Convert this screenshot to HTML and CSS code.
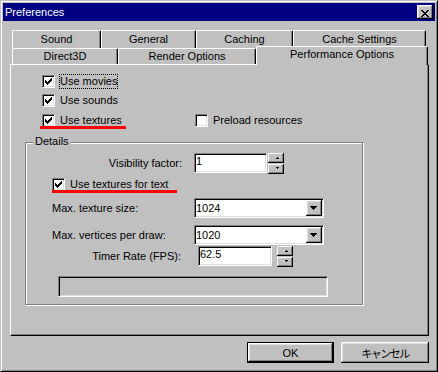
FILE: index.html
```html
<!DOCTYPE html>
<html lang="en">

<head>
    <meta charset="UTF-8">
    <title>Preferences</title>
    <link rel="stylesheet" href="styles.css">
</head>

<body>

    <div class="window">
        <!-- Title bar -->
        <div class="titlebar">
            <span class="title">Preferences</span>
            <button class="close" title="Close">
                <svg width="8" height="7" viewBox="0 0 8 7" shape-rendering="crispEdges">
                    <path d="M0 0h2v1h-2z M6 0h2v1h-2z M1 1h2v1h-2z M5 1h2v1h-2z M2 2h4v1h-4z M3 3h2v1h-2z M2 4h4v1h-4z M1 5h2v1h-2z M5 5h2v1h-2z M0 6h2v1h-2z M6 6h2v1h-2z" fill="#000" />
                </svg>
            </button>
        </div>

        <div class="dialog">
            <!-- Tabs: two rows, the selected one sits in the front row -->
            <div class="tabrow back">
                <div class="tab tab-sound">Sound</div>
                <div class="tab tab-general">General</div>
                <div class="tab tab-caching">Caching</div>
                <div class="tab tab-cache">Cache Settings</div>
            </div>
            <div class="tabrow front">
                <div class="tab tab-d3d">Direct3D</div>
                <div class="tab tab-render">Render Options</div>
                <div class="tab tab-perf active">Performance Options</div>
            </div>

            <div class="panel">
                <div class="checks">
                    <div class="check-row">
                        <label class="check">
                            <span class="box"><svg width="7" height="7" viewBox="0 0 7 7" shape-rendering="crispEdges"><path d="M0 2h1v3h-1z M1 3h1v3h-1z M2 4h1v3h-1z M3 3h1v3h-1z M4 2h1v3h-1z M5 1h1v3h-1z M6 0h1v3h-1z" /></svg></span>
                            <span class="check-text focus">Use movies</span>
                        </label>
                    </div>
                    <div class="check-row">
                        <label class="check">
                            <span class="box"><svg width="7" height="7" viewBox="0 0 7 7" shape-rendering="crispEdges"><path d="M0 2h1v3h-1z M1 3h1v3h-1z M2 4h1v3h-1z M3 3h1v3h-1z M4 2h1v3h-1z M5 1h1v3h-1z M6 0h1v3h-1z" /></svg></span>
                            <span class="check-text">Use sounds</span>
                        </label>
                    </div>
                    <div class="check-row third">
                        <label class="check wide mark mark-short">
                            <span class="box"><svg width="7" height="7" viewBox="0 0 7 7" shape-rendering="crispEdges"><path d="M0 2h1v3h-1z M1 3h1v3h-1z M2 4h1v3h-1z M3 3h1v3h-1z M4 2h1v3h-1z M5 1h1v3h-1z M6 0h1v3h-1z" /></svg></span>
                            <span class="check-text">Use textures</span>
                        </label>
                        <label class="check">
                            <span class="box"></span>
                            <span class="check-text">Preload resources</span>
                        </label>
                    </div>
                </div>

                <!-- Details group -->
                <div class="group">
                    <span class="group-title">Details</span>

                    <div class="row">
                        <span class="row-label right">Visibility factor:</span>
                        <div class="field">1</div>
                        <div class="spin">
                            <div class="spin-btn up"><svg width="3" height="2" viewBox="0 0 3 2" shape-rendering="crispEdges"><path d="M1 0h1v1h-1z M0 1h3v1h-3z" /></svg></div>
                            <div class="spin-btn down"><svg width="3" height="2" viewBox="0 0 3 2" shape-rendering="crispEdges"><path d="M0 0h3v1h-3z M1 1h1v1h-1z" /></svg></div>
                        </div>
                    </div>

                    <div class="check-row inner">
                        <label class="check mark mark-long">
                            <span class="box"><svg width="7" height="7" viewBox="0 0 7 7" shape-rendering="crispEdges"><path d="M0 2h1v3h-1z M1 3h1v3h-1z M2 4h1v3h-1z M3 3h1v3h-1z M4 2h1v3h-1z M5 1h1v3h-1z M6 0h1v3h-1z" /></svg></span>
                            <span class="check-text">Use textures for text</span>
                        </label>
                    </div>

                    <div class="row combo-row">
                        <span class="row-label left">Max. texture size:</span>
                        <div class="combo">
                            <span>1024</span>
                            <div class="combo-btn"><svg width="7" height="4" viewBox="0 0 7 4" shape-rendering="crispEdges"><path d="M0 0h7v1h-7z M1 1h5v1h-5z M2 2h3v1h-3z M3 3h1v1h-1z" /></svg></div>
                        </div>
                    </div>

                    <div class="row combo-row">
                        <span class="row-label left">Max. vertices per draw:</span>
                        <div class="combo">
                            <span>1020</span>
                            <div class="combo-btn"><svg width="7" height="4" viewBox="0 0 7 4" shape-rendering="crispEdges"><path d="M0 0h7v1h-7z M1 1h5v1h-5z M2 2h3v1h-3z M3 3h1v1h-1z" /></svg></div>
                        </div>
                    </div>

                    <div class="row timer-row">
                        <span class="row-label right timer">Timer Rate (FPS):</span>
                        <div class="field timer">62.5</div>
                        <div class="spin timer">
                            <div class="spin-btn up"><svg width="3" height="2" viewBox="0 0 3 2" shape-rendering="crispEdges"><path d="M1 0h1v1h-1z M0 1h3v1h-3z" /></svg></div>
                            <div class="spin-btn down"><svg width="3" height="2" viewBox="0 0 3 2" shape-rendering="crispEdges"><path d="M0 0h3v1h-3z M1 1h1v1h-1z" /></svg></div>
                        </div>
                    </div>

                    <div class="status"></div>
                </div>
            </div>

            <div class="actions">
                <button class="btn default">OK</button>
                <button class="btn cancel">キャンセル</button>
            </div>
        </div>
    </div>

</body>

</html>
```

FILE: styles.css
```css
* {
    box-sizing: border-box;
}

body {
    margin: 0;
    font-family: "Liberation Sans", Arial, sans-serif;
    font-size: 11px;
    color: #000;
}

.window {
    width: 438px;
    height: 372px;
    padding: 2px;
    background: #c0c0c0;
    border: 1px solid;
    border-color: #c0c0c0 #000 #000 #c0c0c0;
    box-shadow: inset 1px 1px #fff, inset -1px -1px #808080;
}

.titlebar {
    height: 18px;
    padding: 0 2px;
    display: flex;
    align-items: center;
    justify-content: space-between;
    background: #000080;
    color: #fff;
    line-height: 13px;
}

.close {
    width: 16px;
    height: 14px;
    padding: 0;
    border: 0;
    background: #c0c0c0;
    box-shadow: inset -1px -1px #000, inset 1px 1px #fff, inset -2px -2px #808080, inset 2px 2px #dfdfdf;
}

.close svg {
    display: block;
    margin: 3px 0 0 4px;
}

.dialog {
    padding: 9px 6px 0 7px;
}

/* tabs */
.tabrow {
    display: flex;
    margin-left: 2px;
}

.tabrow.back {
    height: 18px;
}

.tabrow.front {
    height: 16px;
    align-items: flex-end;
}

.tab {
    height: 100%;
    display: flex;
    align-items: center;
    justify-content: center;
    background: #c0c0c0;
    border-top: 1px solid #fff;
    border-left: 1px solid #fff;
    border-right: 1px solid #000;
    border-radius: 2px 2px 0 0;
    box-shadow: inset -1px 0 #808080;
    line-height: 13px;
    white-space: nowrap;
}

.tabrow.front .tab {
    padding-bottom: 1px;
}

.tab-sound { width: 89px; }
.tab-general { width: 95px; }
.tab-caching { width: 97px; }
.tab-cache { width: 133px; }
.tab-d3d { width: 106px; }
.tab-render { width: 138px; }
.tab-perf { width: 172px; }

.tab.active {
    position: relative;
    z-index: 1;
    height: 19px;
    margin-bottom: -1px;
    padding-bottom: 4px;
}

.tabrow.front .tab.active {
    padding-bottom: 4px;
}

.panel {
    height: 272px;
    padding: 10px 0 0 14px;
    border: 1px solid;
    border-color: #fff #000 #000 #fff;
    box-shadow: inset -1px -1px #808080;
}

/* checkboxes */
.checks {
    padding-left: 17px;
}

.check-row {
    display: flex;
    align-items: center;
    height: 13px;
}

.check-row + .check-row {
    margin-top: 6px;
}

.check-row.third {
    margin-top: 7px;
}

.check {
    display: flex;
    align-items: center;
}

.check.wide {
    width: 153px;
}

.box {
    width: 13px;
    height: 13px;
    flex: none;
    padding: 2px;
    background: #fff;
    border: 1px solid;
    border-color: #808080 #fff #fff #808080;
    box-shadow: inset 1px 1px #000, inset -1px -1px #dfdfdf;
}

.box svg {
    display: block;
}

.check-text {
    margin-left: 4px;
    border: 1px solid transparent;
    line-height: 13px;
    white-space: nowrap;
}

.check-text.focus {
    border: 1px dotted #000;
}

/* red marks under some options */
.mark {
    position: relative;
}

.mark::after {
    content: "";
    position: absolute;
    top: 13px;
    height: 3px;
    background: #f00;
}

.mark-short::after {
    left: -2px;
    width: 86px;
}

.mark-long::after {
    left: 0;
    width: 125px;
}

/* details group */
.group {
    position: relative;
    width: 338px;
    height: 163px;
    margin-top: 15px;
    padding-top: 10px;
    border: 1px solid #808080;
    box-shadow: inset 1px 1px #fff, 1px 1px #fff;
}

.group-title {
    position: absolute;
    top: -8px;
    left: 7px;
    padding: 0 2px;
    background: #c0c0c0;
    line-height: 13px;
}

.row {
    display: flex;
    align-items: center;
    height: 20px;
}

.row-label {
    width: 156px;
    flex: none;
    white-space: nowrap;
}

.row-label.right {
    text-align: right;
}

.row-label.left {
    padding-left: 26px;
}

.row-label.timer {
    width: 155px;
}

.check-row.inner {
    margin-top: 5px;
    padding-left: 26px;
}

.combo-row {
    margin-top: 7px;
}

.timer-row {
    margin-top: 1px;
}

.field {
    width: 73px;
    height: 20px;
    margin-left: 12px;
    padding: 1px 0 0 1px;
    background: #fff;
    border: 1px solid;
    border-color: #808080 #fff #fff #808080;
    box-shadow: inset 1px 1px #000, inset -1px -1px #dfdfdf;
    line-height: 13px;
}

.field.timer {
    width: 74px;
    margin-left: 17px;
}

.spin {
    align-self: flex-start;
    display: flex;
    flex-direction: column;
    gap: 1px;
    margin-left: 1px;
}

.spin.timer {
    margin-left: 5px;
}

.spin-btn {
    width: 16px;
    height: 10px;
    background: #c0c0c0;
    box-shadow: inset -1px -1px #000, inset 1px 1px #fff, inset -2px -2px #808080;
}

.spin-btn svg {
    display: block;
    margin-left: 8px;
}

.spin-btn.up svg {
    margin-top: 4px;
}

.spin-btn.down svg {
    margin-top: 3px;
}

.combo {
    width: 130px;
    height: 20px;
    margin-left: 12px;
    padding: 1px;
    display: flex;
    align-items: center;
    background: #fff;
    border: 1px solid;
    border-color: #808080 #fff #fff #808080;
    box-shadow: inset 1px 1px #000, inset -1px -1px #dfdfdf;
    line-height: 16px;
}

.combo-btn {
    width: 16px;
    height: 16px;
    margin-left: auto;
    background: #c0c0c0;
    box-shadow: inset -1px -1px #000, inset 1px 1px #fff, inset -2px -2px #808080, inset 2px 2px #dfdfdf;
}

.combo-btn svg {
    display: block;
    margin: 6px 0 0 4px;
}

.status {
    width: 270px;
    height: 21px;
    margin: 10px 0 0 32px;
    border: 1px solid;
    border-color: #808080 #fff #fff #808080;
    box-shadow: inset 1px 1px #000, inset -1px -1px #dfdfdf;
}

/* bottom buttons */
.actions {
    display: flex;
    justify-content: flex-end;
    gap: 7px;
    margin-top: 6px;
}

.btn {
    width: 87px;
    height: 21px;
    padding: 0;
    border: 0;
    background: #c0c0c0;
    font: inherit;
    color: #000;
    box-shadow: inset -1px -1px #000, inset 1px 1px #fff, inset -2px -2px #808080, inset 2px 2px #dfdfdf;
}

.btn.default {
    box-shadow: inset 0 0 0 1px #000, inset -2px -2px #000, inset 2px 2px #fff, inset -3px -3px #808080, inset 3px 3px #dfdfdf;
}

.btn.cancel {
    width: 88px;
    font-family: "Liberation Sans", "Noto Sans CJK JP", sans-serif;
    letter-spacing: -1.5px;
}
```
